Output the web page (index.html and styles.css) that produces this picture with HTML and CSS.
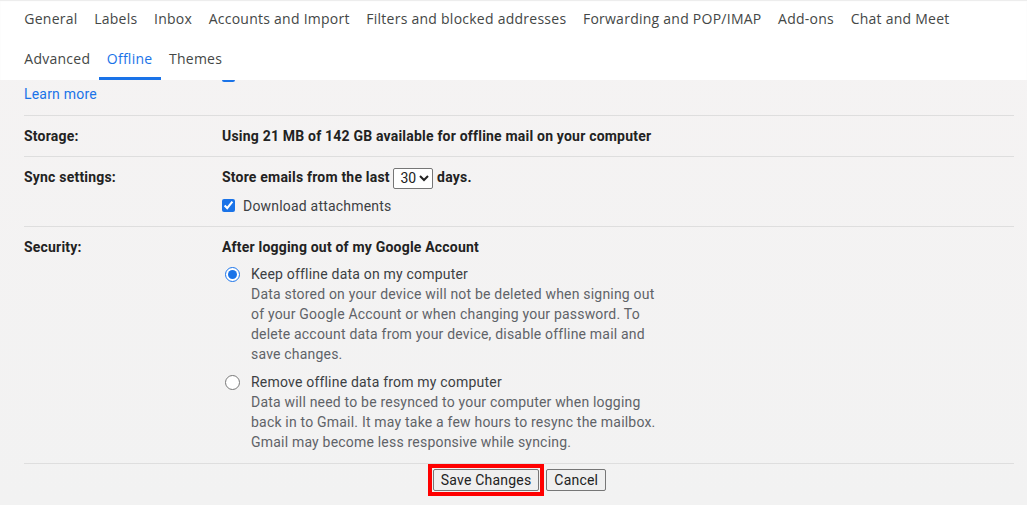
FILE: index.html
```html
<!DOCTYPE html>
<html lang="en">
<head>
  <meta charset="UTF-8">
  <meta name="viewport" content="width=device-width, initial-scale=1.0">
  <title>Settings - Offline</title>
  <link rel="stylesheet" href="styles.css">
</head>
<body>
  <!-- Settings tabs -->
  <div class="tabs">
    <div class="tab-row">
      <a class="tab">General</a>
      <a class="tab">Labels</a>
      <a class="tab">Inbox</a>
      <a class="tab">Accounts and Import</a>
      <a class="tab">Filters and blocked addresses</a>
      <a class="tab">Forwarding and POP/IMAP</a>
      <a class="tab">Add-ons</a>
      <a class="tab">Chat and Meet</a>
    </div>
    <div class="tab-row">
      <a class="tab">Advanced</a>
      <a class="tab active">Offline</a>
      <a class="tab">Themes</a>
    </div>
  </div>

  <!-- Offline settings -->
  <div class="settings">
    <div class="row row-top">
      <div class="label"><a class="link" href="#">Learn more</a></div>
      <div class="value">
        <div class="cut"><input type="checkbox" checked></div>
      </div>
    </div>

    <div class="row">
      <div class="label">Storage:</div>
      <div class="value strong">Using 21 MB of 142 GB available for offline mail on your computer</div>
    </div>

    <div class="row">
      <div class="label">Sync settings:</div>
      <div class="value">
        <div class="strong">Store emails from the last
          <select class="days">
            <option>7</option>
            <option selected>30</option>
            <option>90</option>
          </select>
          days.</div>
        <label class="check">
          <input type="checkbox" checked>
          Download attachments
        </label>
      </div>
    </div>

    <div class="row row-security">
      <div class="label">Security:</div>
      <div class="value">
        <div class="strong">After logging out of my Google Account</div>
        <label class="option">
          <input type="radio" name="logout" checked>
          <span>
            <span class="option-title">Keep offline data on my computer</span>
            <span class="option-desc">Data stored on your device will not be deleted when signing out of your Google Account or when changing your password. To delete account data from your device, disable offline mail and save changes.</span>
          </span>
        </label>
        <label class="option">
          <input type="radio" name="logout">
          <span>
            <span class="option-title">Remove offline data from my computer</span>
            <span class="option-desc">Data will need to be resynced to your computer when logging back in to Gmail. It may take a few hours to resync the mailbox. Gmail may become less responsive while syncing.</span>
          </span>
        </label>
      </div>
    </div>

    <div class="actions">
      <span class="highlight"><button>Save Changes</button></span>
      <button>Cancel</button>
    </div>
  </div>
</body>
</html>
```

FILE: styles.css
```css
body {
  margin: 0;
  padding: 0;
  font-family: Roboto, 'Liberation Sans', sans-serif;
  font-size: 14px;
  letter-spacing: 0.2px;
  color: #222;
  background: linear-gradient(180deg, #f5f3f3, #f2f2f2);
  height: 505px;
  overflow: hidden;
}

/* Tabs */
.tabs {
  background: #fff;
  padding-left: 16px;
  box-shadow: inset 0 1px 1px rgba(0,0,0,0.08);
}
.tab-row {
  display: flex;
  height: 40px;
}
.tab {
  display: flex;
  align-items: center;
  padding: 0 8.3px;
  font-family: 'Open Sans', sans-serif;
  font-size: 14px;
  letter-spacing: 0.25px;
  color: #444746;
  border-bottom: 3px solid transparent;
  box-sizing: border-box;
}
.tab.active {
  color: #1a73e8;
  border-bottom-color: #1a73e8;
}

/* Settings rows */
.settings {
  margin: 0 13px 0 24px;
}
.row {
  display: flex;
  padding: 10px 0;
  border-bottom: 1px solid #dedede;
  line-height: 20px;
}
.row-top {
  padding-top: 0;
  padding-bottom: 11px;
}
.row-top .label {
  padding-top: 4px;
}
.row-security {
  padding-bottom: 11px;
}
.label {
  width: 198px;
  flex-shrink: 0;
  font-weight: 700;
  color: #222;
}
.value {
  flex: 1;
}
.strong {
  font-weight: 700;
  color: #222;
}
.link {
  color: #1a73e8;
  text-decoration: none;
  font-weight: 400;
}

.cut {
  height: 2px;
  overflow: hidden;
  display: flex;
  align-items: flex-end;
}
input[type="checkbox"] {
  width: 13px;
  height: 13px;
  margin: 0;
  accent-color: #1a73e8;
  flex-shrink: 0;
}
.days {
  font-family: Roboto, sans-serif;
  font-size: 14px;
  height: 21px;
  padding: 0 0 0 2px;
  border: 1px solid #767676;
  border-radius: 2px;
  background: #fff;
  color: #222;
  vertical-align: middle;
}
.check {
  display: flex;
  align-items: center;
  gap: 8px;
  margin-top: 7px;
  color: #3c4043;
}

.option {
  display: flex;
  align-items: flex-start;
  gap: 11px;
  margin-top: 7px;
  color: #3c4043;
}
.option + .option {
  margin-top: 8px;
}
.option input[type="radio"] {
  width: 15px;
  height: 15px;
  margin: 3px 0 0 3px;
  accent-color: #1a73e8;
  flex-shrink: 0;
}
.option-title {
  display: block;
}
.option-desc {
  display: block;
  width: 412px;
  color: #5f6368;
}

/* Buttons */
.actions {
  display: flex;
  justify-content: center;
  align-items: center;
  gap: 2px;
  padding-right: 4px;
}
.actions button {
  font-family: Roboto, sans-serif;
  font-size: 14px;
  letter-spacing: 0.2px;
  color: #222;
  height: 22px;
  padding: 0 7px;
  background: #efefef;
  border: 1px solid #767676;
  border-radius: 2px;
}
.highlight {
  display: flex;
  padding: 1px;
  border: 4px solid #ff0000;
}
```
